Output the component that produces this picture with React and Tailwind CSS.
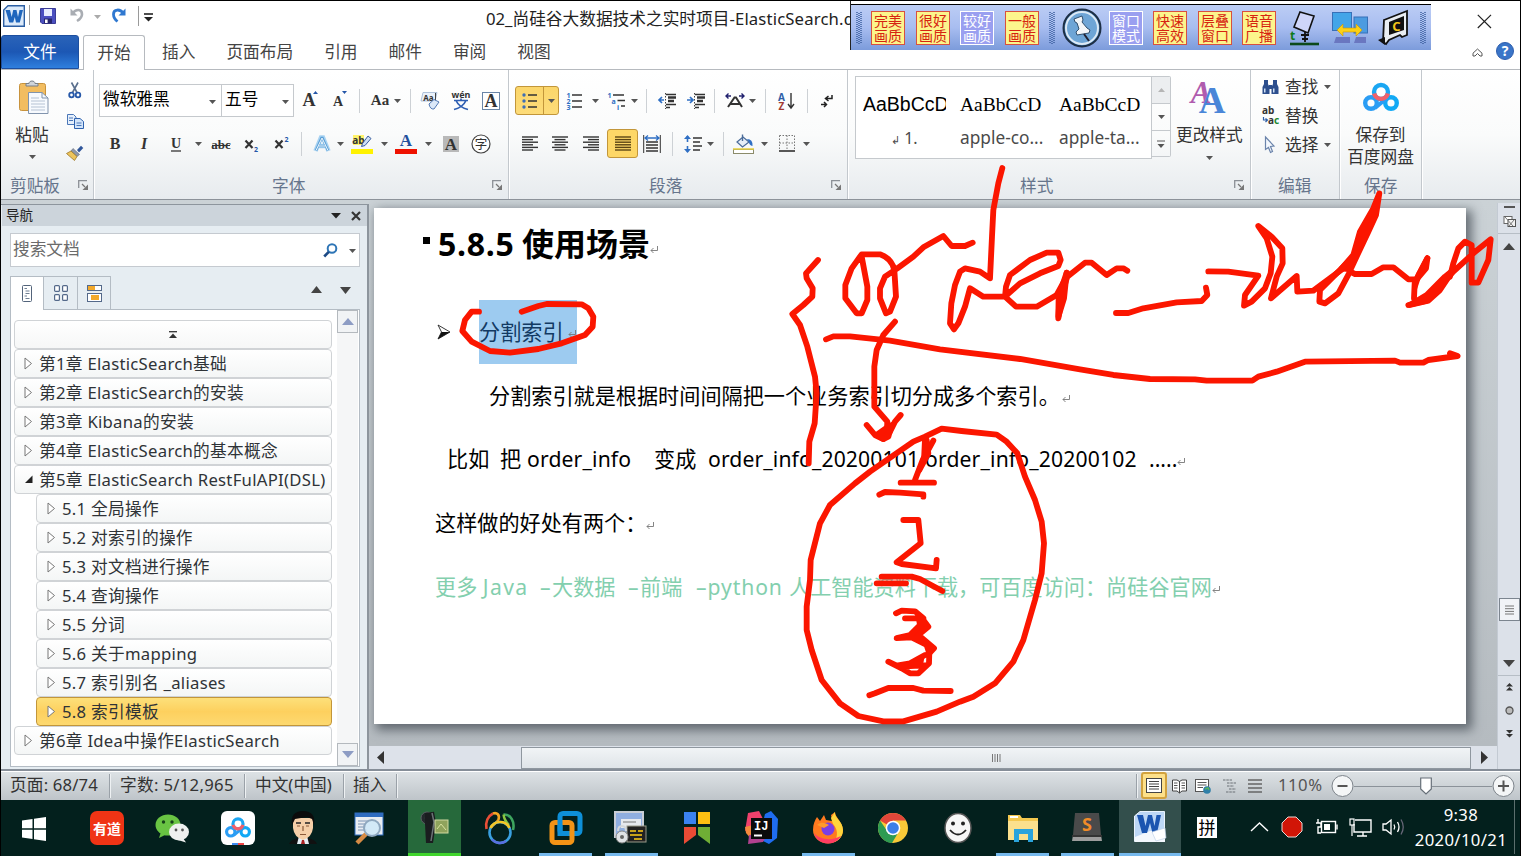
import React from "react";

const Svg = ({ w, h, vb, className = "", children }) => (
  <svg width={w} height={h} viewBox={vb || `0 0 ${w} ${h}`} className={`block shrink-0 overflow-visible ${className}`} fill="none">
    {children}
  </svg>
);

/* ---------- small shared pieces ---------- */
const Tri = ({ className = "", c = "#555" }) => (
  <Svg w={7} h={4} className={className}><path d="M0 0H7L3.5 4Z" fill={c} /></Svg>
);
const Sep = ({ className = "" }) => <div className={`h-6 w-px shrink-0 bg-[#cdd1d5] ${className}`} />;
const Launcher = ({ className = "" }) => (
  <Svg w={11} h={11} className={className}>
    <path d="M.7 8V.7H9" stroke="#8b9096" strokeWidth="1.3" />
    <path d="M4 4L7 7" stroke="#777" strokeWidth="1.2" /><path d="M10 4.5V10H4.5Z" fill="#777" />
  </Svg>
);
const Serif = ({ x, y, s, c = "#333", b, i, children, a = "middle" }) => (
  <text x={x} y={y} fontSize={s} fill={c} textAnchor={a} fontFamily="'Liberation Serif', serif" fontWeight={b ? 700 : 400} fontStyle={i ? "italic" : "normal"}>{children}</text>
);
const Sans = ({ x, y, s, c = "#333", b, a = "middle", children }) => (
  <text x={x} y={y} fontSize={s} fill={c} textAnchor={a} fontFamily="'Noto Sans', 'Noto Sans CJK SC', sans-serif" fontWeight={b ? 700 : 400}>{children}</text>
);

const BaiduPan = ({ w = 36, h = 30 }) => (
  <Svg w={w} h={h} vb="0 0 36 30">
    <circle cx="8" cy="21" r="5.8" stroke="#2b9df4" strokeWidth="4.4" />
    <circle cx="28" cy="21" r="5.8" stroke="#12a9f5" strokeWidth="4.4" />
    <path d="M12 26L24 16" stroke="#2b9df4" strokeWidth="4" />
    <circle cx="18" cy="10" r="7" stroke="#1aa6f2" strokeWidth="4.4" />
    <path d="M11.2 11.5A7 7 0 0 0 24.8 11.5" stroke="#f0606a" strokeWidth="4.4" />
  </Svg>
);

/* ---------- title bar ---------- */
const TitleBar = () => (
  <div className="flex h-[34px] shrink-0 items-start pl-[2px] pt-[4px]">
    <Svg w={22} h={22}>
      <path d="M5 .7H21.3V21.3H.7V5Z" fill="#dbe9f8" stroke="#2b5ea3" strokeWidth="1.4" />
      <path d="M5 2.5H19.5V19.5H2.5V5Z" fill="#dceafa" />
      <path d="M2.500 5H7L8.700 12L10.200 5H13.500L15 12L16.500 5H20L16.800 17.500H13L11.800 12L10.200 17.500H6.300Z" fill="#1f66bd" />
    </Svg>
    <div className="ml-[4px] h-[20px] w-px bg-[#9a9a9a]" />
    <Svg w={16} h={16} className="ml-[10px] mt-[3px]">
      <path d="M.5 .5H15.5V15.5H2L.5 14Z" fill="#4b4fc0" stroke="#3a3b96" />
      <rect x="4" y="1" width="8" height="7" fill="#e8ecff" /><rect x="4" y="10.5" width="8" height="5" fill="#26266e" /><rect x="5" y="11.5" width="2.6" height="3.5" fill="#fff" />
    </Svg>
    <Svg w={15} h={16} className="ml-[14px] mt-[2px]">
      <path d="M2.5 6.5C6 1.5 12 2 12 7.2C12 10.5 9.5 12.5 7 14" stroke="#a9adb3" strokeWidth="2.6" /><path d="M.5 1.5V8.5H7.5Z" fill="#a9adb3" />
    </Svg>
    <Tri className="ml-[9px] mt-[10px]" c="#aaa" />
    <Svg w={16} h={16} className="ml-[10px] mt-[2px]">
      <path d="M12.5 6.5C9 1.5 2.5 2 2.5 7.2C2.5 10.5 4 12.5 6.5 14.5" stroke="#2f78d0" strokeWidth="2.8" /><path d="M14.5 1.5V8.5H7.5Z" fill="#2f78d0" />
    </Svg>
    <div className="ml-[11px] mt-[1px] h-[20px] w-px bg-[#9a9a9a]" />
    <Svg w={9} h={9} className="ml-[5px] mt-[8px]"><path d="M0 1H9" stroke="#222" strokeWidth="1.6" /><path d="M0 4H9L4.5 8.5Z" fill="#222" /></Svg>
    <div className="ml-[333px] whitespace-nowrap text-[16.7px] leading-[27px] text-[#222]">
      <span>02_</span>尚硅谷大数据技术之实时项目<span className="tracking-[0.15px]">-ElasticSearch.docx</span>
    </div>
    <Svg w={15} h={15} className="ml-auto mr-[28px] mt-[9px]"><path d="M.8 .8L14 14M14 .8L.8 14" stroke="#222" strokeWidth="1.2" /></Svg>
  </div>
);

const tabs = [
  ["插入", "ml-[17px]"],
  ["页面布局", "ml-[31px]"],
  ["引用", "ml-[31px]"],
  ["邮件", "ml-[31px]"],
  ["审阅", "ml-[31px]"],
  ["视图", "ml-[31px]"],
];
const TabRow = () => (
  <div className="flex h-[35px] shrink-0 items-stretch border-b border-[#b6babf] text-[16.7px] text-[#444]">
    <div className="flex w-[78px] items-center justify-center rounded-t-[3px] border border-[#1d4f9f] bg-linear-to-b from-[#2a63b8] via-[#1c57b4] to-[#2f7fde] text-white">文件</div>
    <div className="-mb-px ml-[4px] flex w-[62px] items-center justify-center rounded-t-[3px] border border-b-0 border-[#b6babf] bg-white pb-px">开始</div>
    {tabs.map(([t, m]) => (
      <div key={t} className={`flex items-center whitespace-nowrap ${m}`}>{t}</div>
    ))}
    <Svg w={11} h={9} className="ml-auto mr-[13px] mt-[13px]"><path d="M1 5.2L5.5 1L10 5.2V8H8L5.5 5.5L3 8H1Z" stroke="#555" fill="#fff" /></Svg>
    <Svg w={18} h={18} className="mr-[6px] mt-[7px]">
      <circle cx="9" cy="9" r="8.5" fill="#3a75c8" stroke="#2f5fae" /><Sans x={9} y={14} s={14} c="#fff" b>?</Sans>
    </Svg>
  </div>
);

/* ---------- ribbon ---------- */
const Group = ({ className, children }) => (
  <div className={`flex shrink-0 flex-col border-r border-[#c3c8cd] shadow-[1px_0_0_#fff] ${className}`}>{children}</div>
);
const Label = ({ children, className = "", launch }) => (
  <div className="mt-auto flex h-[26px] items-center pb-[1px] text-[16.7px] text-[#66758c]">
    <span className={`whitespace-nowrap ${className}`}>{children}</span>
    {launch && <Launcher className={launch} />}
  </div>
);

const Clipboard = () => (
  <Group className="w-[93px]">
    <div className="flex">
      <div className="flex w-[62px] flex-col items-center pt-[10px]">
        <Svg w={30} h={34} className="ml-[3px]">
          <rect x=".5" y="3.5" width="26" height="27" rx="2" fill="#f2bd60" stroke="#c8933d" />
          <path d="M7 6V3.5H10C10 .2 16 .2 16 3.5H19V6Z" fill="#cfd4da" stroke="#777f88" />
          <path d="M9.500 12.500H23L29 18V33.500H9.500Z" fill="#f7fafe" stroke="#8194ad" />
          <path d="M23 12.500V18H29" stroke="#8194ad" /><path d="M12 18H20M12 21H26M12 24H26M12 27H26M12 30H26" stroke="#b5c2d3" />
        </Svg>
        <div className="mt-[9px] text-[16.7px] leading-[24px] text-[#333]">粘贴</div>
        <Tri className="mt-[8px]" />
      </div>
      <div className="flex w-[24px] flex-col items-center pt-[12px]">
        <Svg w={14} h={17}>
          <path d="M3.500 .5L9 10.500M10 .5L4.500 10.500" stroke="#5a6f8d" strokeWidth="1.600" />
          <circle cx="3.500" cy="13" r="2.300" stroke="#2557a8" strokeWidth="1.800" /><circle cx="10" cy="13" r="2.300" stroke="#2557a8" strokeWidth="1.800" />
        </Svg>
        <Svg w={17} h={15} className="mt-[15px]">
          <path d="M.5 .5H6.500L9 3V10.500H.5Z" fill="#e5effb" stroke="#4a77b8" /><path d="M7.500 4.500H13L16.500 7.500V14.500H7.500Z" fill="#d3e5fa" stroke="#2f62ae" />
          <path d="M2 4H6M2 6.500H6M9.500 9H14.500M9.500 11.500H14.500" stroke="#4a77b8" />
        </Svg>
        <Svg w={18} h={16} className="mt-[16px]">
          <path d="M11 5L15 .8L17.300 3L13 7.500Z" fill="#30569a" /><path d="M7 3.500L13.500 9.500L11 11.500L5 6Z" fill="#8f98a8" stroke="#5c6575" strokeWidth=".6" />
          <path d="M5 6L11 11.500L8.500 15.500L.5 8.500Z" fill="#edc45c" stroke="#9b7627" strokeWidth=".8" />
        </Svg>
      </div>
    </div>
    <Label className="ml-[9px]" launch="ml-[18px]">剪贴板</Label>
  </Group>
);

const FontGroup = () => (
  <Group className="w-[415px] pl-[5px]">
    <div className="mt-[14px] flex h-[33px] items-center">
      <div className="flex h-[33px] w-[195px] shrink-0 border border-[#c5c9cd] bg-white text-[16.7px] text-black">
        <div className="flex w-[122px] items-center justify-between border-r border-[#c5c9cd] pl-[3px] pr-[5px]"><span className="-mt-1">微软雅黑</span><Tri className="mt-[2px]" /></div>
        <div className="flex flex-1 items-center justify-between pl-[3px] pr-[4px]"><span className="-mt-1">五号</span><Tri className="mt-[2px]" /></div>
      </div>
      <Svg w={18} h={18} className="ml-[8px] mt-[-3px]"><Serif x={7} y={16} s={18} b>A</Serif><path d="M11 4L13.500 1L16 4Z" fill="#2456a8" /></Svg>
      <Svg w={16} h={18} className="ml-[12px] mt-[-3px]"><Serif x={6} y={16} s={14} b>A</Serif><path d="M10 1H15L12.500 4Z" fill="#2456a8" /></Svg>
      <Sep className="ml-[11px]" />
      <Svg w={20} h={18} className="ml-[10px] mt-[-2px]"><Serif x={10} y={14} s={15} b>Aa</Serif></Svg>
      <Tri className="ml-[4px]" />
      <Sep className="ml-[9px]" />
      <Svg w={20} h={18} className="ml-[10px]">
        <path d="M2 .5H16L14 9H0Z" fill="#eaf1fa" stroke="#9db4d2" strokeWidth=".8" /><Sans x={7.500} y={8.500} s={8} c="#333" b>Aa</Sans><path d="M14.500 1V9" stroke="#444" />
        <path d="M8 12L13 7.500L18 10L13 17Q9 17.500 8 12Z" fill="#dbe8f8" stroke="#5279b5" />
      </Svg>
      <Svg w={20} h={20} className="ml-[10px]"><Sans x={10} y={7} s={9} b>wén</Sans><path d="M3 9.500H17M10 7.500V9.500M5 9.500C7 14 11 17 17 18.500M15 9.500C13 14 9 17 3 18.500" stroke="#2f5fb3" strokeWidth="1.700" /></Svg>
      <Svg w={18} h={18} className="ml-[11px]"><rect x=".5" y=".5" width="17" height="17" fill="#fff" stroke="#6a86a8" /><Serif x={9} y={15} s={18} b>A</Serif></Svg>
    </div>
    <div className="mt-[15px] flex h-[24px] items-center">
      <Svg w={16} h={18} className="ml-[8px]"><Serif x={8} y={14} s={16} b>B</Serif></Svg>
      <Svg w={12} h={18} className="ml-[15px]"><Serif x={6} y={14} s={16} b i>I</Serif></Svg>
      <Svg w={12} h={18} className="ml-[20px]"><Serif x={6} y={13} s={14} b>U</Serif><path d="M1 16H11" stroke="#333" strokeWidth="1.300" /></Svg>
      <Tri className="ml-[13px]" />
      <Svg w={20} h={18} className="ml-[9px]"><Serif x={10} y={14} s={13} b>abc</Serif><path d="M1 10.500H19" stroke="#333" /></Svg>
      <Svg w={16} h={18} className="ml-[13px]"><path d="M1.500 5.500L8.500 13M8.500 5.500L1.500 13" stroke="#333" strokeWidth="2.200" /><Sans x={12} y={17} s={7} c="#2456a8" b>2</Sans></Svg>
      <Svg w={16} h={18} className="ml-[14px]"><path d="M1.500 5.500L8.500 13M8.500 5.500L1.500 13" stroke="#333" strokeWidth="2.200" /><Sans x={12.500} y={6.500} s={7} c="#2456a8" b>2</Sans></Svg>
      <Sep className="ml-[11px]" />
      <Svg w={18} h={20} className="ml-[11px]"><path d="M2.500 17L8 3.500H10L15.500 17M5 12H13" stroke="#a9d3f2" strokeWidth="4.500" /><path d="M3 16.500L8.500 4H9.500L15 16.500M5.500 12H12.500" stroke="#5a9fd6" strokeWidth="2.400" /><path d="M3 16.500L9 4L15 16.500M5.500 12H12.500" stroke="#eef7fd" strokeWidth="1" /></Svg>
      <Tri className="ml-[6px]" />
      <Svg w={22} h={22} className="ml-[7px]">
        <path d="M2 2H13V12H2Z" fill="#fff36b" /><Sans x={7.500} y={10.500} s={10} b>ab</Sans>
        <path d="M17 3L20 5.500L14 12.500L10.500 13.500L11.500 10.500Z" fill="#cfdff5" stroke="#3a5f9f" /><rect x="0" y="16" width="22" height="5" fill="#fff200" />
      </Svg>
      <Tri className="ml-[8px]" />
      <Svg w={22} h={22} className="ml-[7px]"><Serif x={11} y={13} s={17} c="#234f9d" b>A</Serif><rect x="0" y="16" width="22" height="5" fill="#ee1100" /></Svg>
      <Tri className="ml-[8px]" />
      <Svg w={16} h={16} className="ml-[11px]"><rect width="16" height="16" fill="#b9b9b9" /><Serif x={8} y={14} s={17} b>A</Serif></Svg>
      <Svg w={20} h={20} className="ml-[12px]"><circle cx="10" cy="10" r="9" stroke="#444" fill="#fff" strokeWidth="1.200" /><Sans x={10} y={14.500} s={12.500}>字</Sans></Svg>
    </div>
    <Label className="ml-[173px]" launch="ml-[187px]">字体</Label>
  </Group>
);

const Lines = ({ l, w = 16, c = "#333" }) => (
  <Svg w={w} h={15}>
    {l.map(([a, b], k) => <path key={k} d={`M${a} ${1 + k * 2.6}H${b}`} stroke={c} strokeWidth="1.400" />)}
  </Svg>
);
const LeftL = [[0, 16], [0, 11], [0, 16], [0, 11], [0, 16], [0, 11]];
const CenL = [[0, 16], [2.5, 13.5], [0, 16], [2.5, 13.5], [0, 16], [2.5, 13.5]];
const RightL = [[0, 16], [5, 16], [0, 16], [5, 16], [0, 16], [5, 16]];
const FullL = [[0, 16], [0, 16], [0, 16], [0, 16], [0, 16], [0, 16]];
const Indent = ({ flip }) => (
  <Svg w={18} h={16}>
    <path d="M8 1.500H18M8 11.500H18M8 14.500H12" stroke="#333" strokeWidth="1.500" /><path d="M10 4.500H18M10 8H16" stroke="#333" strokeWidth="2.300" />
    <path d="M7.500 0V16" stroke="#444" strokeDasharray="1.500 1.500" />
    {flip ? <path d="M0 7H5M3 4L6 7L3 10" stroke="#2f6fc4" strokeWidth="1.700" /> : <path d="M1 7H6M4 4L1 7L4 10" stroke="#2f6fc4" strokeWidth="1.700" />}
  </Svg>
);

const ParagraphGroup = () => (
  <Group className="w-[339px] pl-[6px]">
    <div className="mt-[16px] flex h-[29px] items-center">
      <div className="flex h-[29px] w-[44px] shrink-0 items-center rounded-[3px] border border-[#c2963a] bg-linear-to-b from-[#fbd66b] to-[#fddc79]">
        <Svg w={16} h={16} className="ml-[6px]">
          {[2, 8, 14].map((y) => <g key={y}><circle cx="2" cy={y} r="1.700" fill="#3e6fb5" /><path d={`M6 ${y}H15`} stroke="#333" strokeWidth="1.500" /></g>)}
        </Svg>
        <div className="ml-[5px] h-full w-px bg-[#c2963a]" />
        <Tri className="ml-[4px]" />
      </div>
      <Svg w={16} h={18} className="ml-[7px]">
        {[3, 9, 15].map((y, k) => <g key={y}><Sans x={2.500} y={y + 2.500} s={7} c="#2f6fc4" b>{k + 1}</Sans><path d={`M6 ${y}H16`} stroke="#333" strokeWidth="1.500" /></g>)}
      </Svg>
      <Tri className="ml-[10px]" />
      <Svg w={20} h={18} className="ml-[8px]">
        <Sans x={2.500} y={6} s={7} c="#2f6fc4" b>1</Sans><Sans x={6.500} y={11.500} s={7} c="#2f6fc4" b>a</Sans><Sans x={11} y={17.500} s={7} c="#2f6fc4" b>i</Sans>
        <path d="M6 3H17M10.500 8.500H18M14 14H18" stroke="#333" strokeWidth="1.500" />
      </Svg>
      <Tri className="ml-[4px]" />
      <Sep className="ml-[8px]" />
      <div className="ml-[11px]"><Indent /></div>
      <div className="ml-[11px]"><Indent flip /></div>
      <Sep className="ml-[9px]" />
      <Svg w={20} h={18} className="ml-[10px]">
        <path d="M3 15L9.500 5.500H11L17 15M5 12H15" stroke="#333" strokeWidth="2" /><path d="M1 4H6M3.500 1.500L1 4L3.500 6.500M19 4H14M16.500 1.500L19 4L16.500 6.500" stroke="#20206e" strokeWidth="1.400" />
      </Svg>
      <Tri className="ml-[4px]" />
      <Sep className="ml-[9px]" />
      <Svg w={18} h={18} className="ml-[11px]">
        <Sans x={4.500} y={8.500} s={10} c="#2f5fa8" b>A</Sans><Sans x={4.500} y={17.500} s={10} c="#a23b34" b>Z</Sans><path d="M14 1V15M11 12L14 16L17 12" stroke="#333" strokeWidth="1.400" />
      </Svg>
      <Sep className="ml-[12px]" />
      <Svg w={14} h={16} className="ml-[12px]"><path d="M12 2V5.500H6M8.500 3L5.500 5.500L8.500 8M1 11.500H6M4 9L6.500 11.500L4 14" stroke="#222" strokeWidth="1.500" /></Svg>
    </div>
    <div className="mt-[14px] flex h-[29px] items-center">
      <div className="ml-[7px]"><Lines l={LeftL} /></div>
      <div className="ml-[14px]"><Lines l={CenL} /></div>
      <div className="ml-[15px]"><Lines l={RightL} /></div>
      <div className="ml-[8px] flex h-[29px] w-[31px] items-center justify-center rounded-[3px] border border-[#c2963a] bg-[#fdd767]"><Lines l={FullL} c="#5b4514" /></div>
      <Svg w={18} h={18} className="ml-[5px]">
        <path d="M.7 0V18M17.300 0V18" stroke="#333" /><path d="M3 7H15M3 10H15M3 13H15M3 16H15" stroke="#333" strokeWidth="1.400" /><path d="M2 3H16M5 .5L2 3L5 5.500M13 .5L16 3L13 5.500" stroke="#2f6fc4" strokeWidth="1.300" />
      </Svg>
      <Sep className="ml-[11px]" />
      <Svg w={18} h={18} className="ml-[11px]">
        <path d="M3.500 1V7M3.500 11V17" stroke="#2f6fc4" strokeWidth="1.600" /><path d="M0 4L3.500 0L7 4ZM0 14L3.500 18L7 14Z" fill="#2f6fc4" /><path d="M9 3H18M9 7H16M9 11H18M9 15H16" stroke="#333" strokeWidth="1.500" />
      </Svg>
      <Tri className="ml-[5px]" />
      <Sep className="ml-[9px]" />
      <Svg w={22} h={20} className="ml-[9px]">
        <path d="M4 8L10 3L16 8L9.500 13Z" fill="#e6eef8" stroke="#4a6b99" strokeWidth="1.200" /><path d="M9.500 7V.5" stroke="#4a6b99" strokeWidth="1.400" /><path d="M14 5Q20 5 19.500 12Q16 11 16 8Z" fill="#2f6fc4" /><rect x=".5" y="15.500" width="20" height="4" fill="#fff" stroke="#8b8b6a" /><path d="M0 15H21" stroke="#e4cf3f" strokeWidth="1.500" />
      </Svg>
      <Tri className="ml-[6px]" />
      <Svg w={16} h={17} className="ml-[11px]"><path d="M.5 .5H15.500V15.500M.5 .5V15.500M8 .5V15.500M.5 8H15.500" stroke="#777" strokeDasharray="1.500 1.500" /><path d="M0 16H16" stroke="#222" strokeWidth="1.500" /></Svg>
      <Tri className="ml-[8px]" />
    </div>
    <Label className="ml-[134px]" launch="ml-[149px]">段落</Label>
  </Group>
);

const StyleCell = ({ className = "", big, small, serif }) => (
  <div className={`flex shrink-0 flex-col ${className}`}>
    <div className={serif ? "h-[36px] whitespace-nowrap font-['Liberation_Serif'] text-[19.500px] leading-[36px] text-black" : "h-[36px] w-[83px] overflow-hidden whitespace-nowrap font-['Liberation_Sans'] text-[19.500px] leading-[34px] text-black"}>{big}</div>
    <div className="whitespace-nowrap text-[17.300px] leading-[30px] text-[#4a4a4a]">{small}</div>
  </div>
);

const StylesGroup = () => (
  <Group className="w-[403px]">
    <div className="flex pl-[7px] pt-[6px]">
      <div className="flex h-[83px] w-[297px] shrink-0 overflow-hidden border border-[#c5c9cd] bg-white pt-[10px]">
        <StyleCell className="ml-[7px]" big="AaBbCcD" small={<span className="ml-[28px] text-[16px]"><span className="text-[11px]">↲</span> 1.</span>} />
        <StyleCell className="ml-[14px] w-[83px]" serif big="AaBbCcD" small="apple-co..." />
        <StyleCell className="ml-[16px] w-[83px]" serif big="AaBbCcD" small="apple-ta..." />
      </div>
      <div className="flex h-[81px] w-[19px] shrink-0 flex-col rounded-r-[2px] border border-l-0 border-[#c5c9cd]">
        <div className="flex h-[27px] items-center justify-center border-b border-[#c5c9cd] bg-[#eceef0]"><Svg w={7} h={4}><path d="M0 4H7L3.500 0Z" fill="#b5b5b5" /></Svg></div>
        <div className="flex h-[27px] items-center justify-center border-b border-[#c5c9cd]"><Tri /></div>
        <div className="flex flex-1 items-center justify-center"><Svg w={8} h={8}><path d="M0 1H8" stroke="#555" /><path d="M.5 4H7.500L4 8Z" fill="#555" /></Svg></div>
      </div>
      <div className="ml-[5px] flex flex-col items-center pt-[5px]">
        <Svg w={34} h={31} className="mt-[1px]">
          <Serif x={9} y={21} s={31} c="#b05cae" b i>A</Serif><Serif x={20} y={30.500} s={37} c="#4a86d8" b>A</Serif>
        </Svg>
        <div className="mt-[10px] whitespace-nowrap text-[16.7px] leading-[24px] text-[#333]">更改样式</div>
        <Tri className="mt-[9px]" />
      </div>
    </div>
    <Label className="ml-[172px]" launch="ml-[181px]">样式</Label>
  </Group>
);

const EditGroup = () => (
  <Group className="w-[89px]">
    <div className="mt-[2px] flex flex-col text-[16.7px] text-[#333]">
      <div className="flex h-[29px] items-center pl-[11px]">
        <Svg w={17} h={16}>
          <path d="M2 1H6V5L7.500 8V15H.5V8L2 5ZM11 1H15V5L16.500 8V15H9.500V8L11 5Z" fill="#2d4f8e" /><path d="M7 6H10V10H7Z" fill="#2d4f8e" /><path d="M2 9.500H3.500V13.500H2ZM11 9.500H12.500V13.500H11Z" fill="#cfe0f5" />
        </Svg>
        <span className="ml-[6px]">查找</span><Tri className="ml-[6px]" />
      </div>
      <div className="flex h-[29px] items-center pl-[11px]">
        <Svg w={18} h={18}><Sans x={0} y={7} s={10} b a="start">ab</Sans><path d="M1.500 10V13H5M3.500 11.500L5.500 13L3.500 15" stroke="#2f5fa8" strokeWidth="1.200" /><Sans x={6} y={16.500} s={10} b a="start">a</Sans><Sans x={12} y={16.500} s={10} b a="start" c="#1e8a33">c</Sans></Svg>
        <span className="ml-[5px]">替换</span>
      </div>
      <div className="flex h-[29px] items-center pl-[11px]">
        <Svg w={17} h={18}><path d="M3.500 1L12 10L8.500 10.500L10.500 15.500L8.500 16.500L6.500 11.500L3.500 13.500Z" fill="#f4f8fd" stroke="#6b84ab" strokeWidth="1.200" /></Svg>
        <span className="ml-[6px]">选择</span><Tri className="ml-[6px]" />
      </div>
    </div>
    <Label className="ml-[27px]">编辑</Label>
  </Group>
);

const SaveGroup = () => (
  <Group className="w-[82px]">
    <div className="flex flex-col items-center pt-[12px] text-[16.7px] leading-[22px] text-[#333]">
      <BaiduPan />
      <div className="mt-[12px] whitespace-nowrap">保存到</div>
      <div className="whitespace-nowrap">百度网盘</div>
    </div>
    <Label className="ml-[24px]">保存</Label>
  </Group>
);

const Ribbon = () => (
  <div className="flex h-[130px] shrink-0 border-b border-[#8c9299] bg-linear-to-b from-white via-[#fafbfb] to-[#e7ebee]">
    <Clipboard /><FontGroup /><ParagraphGroup /><StylesGroup /><EditGroup /><SaveGroup />
  </div>
);

/* ---------- navigation pane ---------- */
const outline = [
  ["第1章 ElasticSearch基础", 0], ["第2章 ElasticSearch的安装", 0], ["第3章 Kibana的安装", 0], ["第4章 ElasticSearch的基本概念", 0],
  ["第5章 ElasticSearch RestFulAPI(DSL)", 0, "open"],
  ["5.1 全局操作", 1], ["5.2 对索引的操作", 1], ["5.3 对文档进行操作", 1], ["5.4 查询操作", 1], ["5.5 分词", 1], ["5.6 关于mapping", 1], ["5.7 索引别名 _aliases", 1], ["5.8 索引模板", 1, "on"],
  ["第6章 Idea中操作ElasticSearch", 0],
];
const itemBase = "flex h-[29px] shrink-0 items-center rounded-[4px] border text-[16.7px] text-[#2f3337]";
const ScrollBtn = ({ up }) => (
  <div className="flex h-[23px] w-[21px] items-center justify-center border border-[#b4b9be] bg-[#f1f3f5]">
    <Svg w={12} h={7}><path d={up ? "M0 7H12L6 0Z" : "M0 0H12L6 7Z"} fill="#8d9cc4" /></Svg>
  </div>
);
const NavPane = () => (
  <div className="mt-[4px] flex w-[368px] shrink-0 flex-col border-r-2 border-t border-[#8d959d] bg-[#e6edf2] pl-px">
    <div className="flex h-[21px] shrink-0 items-center bg-[#ccd4db] pl-[4px] text-[13.500px] text-[#222]">
      导航
      <Svg w={10} h={6} className="ml-auto"><path d="M0 0H10L5 5.500Z" fill="#222" /></Svg>
      <Svg w={10} h={10} className="ml-[10px] mr-[6px]"><path d="M1 1L9 9M9 1L1 9" stroke="#333" strokeWidth="2.200" /></Svg>
    </div>
    <div className="ml-[8px] mt-[7px] flex h-[34px] w-[350px] shrink-0 items-center border border-[#c5cad0] bg-white pl-[2px] text-[16.7px] text-[#6b6b6b]">
      <span className="-mt-[3px]">搜索文档</span>
      <Svg w={15} h={15} className="ml-auto"><circle cx="9" cy="5.500" r="4.300" stroke="#2e75b6" strokeWidth="2" /><path d="M5.800 8.800L1.200 13.500" stroke="#1c4a85" strokeWidth="2.600" /></Svg>
      <Tri className="ml-[11px] mr-[3px] mt-[2px]" />
    </div>
    <div className="ml-[8px] mt-[9px] flex h-[33px] w-[350px] shrink-0 items-stretch">
      <div className="z-10 -mb-px flex w-[34px] items-center justify-center border border-b-0 border-[#b4bcc4] bg-white">
        <Svg w={10} h={18}><rect x=".5" y=".5" width="9" height="16" rx="1" fill="#fff" stroke="#53647b" /><path d="M2.500 3.500H5M3.500 6H7.500M3.500 8.500H7.500M2.500 11H5M3.500 13.500H7.500" stroke="#6f7f93" strokeWidth="1" /></Svg>
      </div>
      <div className="flex w-[34px] items-center justify-center border-r border-t border-[#b4bcc4]">
        <Svg w={14} h={16}>{[[0, 0], [8, 0], [0, 9], [8, 9]].map(([x, y]) => <rect key={`${x}-${y}`} x={x + 0.6} y={y + 0.6} width="4.800" height="5.800" rx="1" fill="#fff" stroke="#54698a" strokeWidth="1.200" />)}</Svg>
      </div>
      <div className="flex w-[33px] items-center justify-center border-r border-t border-[#b4bcc4]">
        <Svg w={15} h={17}><rect x=".5" y=".5" width="14" height="5" fill="#fff" stroke="#54698a" /><rect x="1" y="1" width="7" height="4" fill="#f3a92b" /><rect x=".5" y="8.500" width="14" height="8" fill="#fff" stroke="#54698a" /><rect x="4" y="10" width="8" height="5" fill="#f3a92b" /></Svg>
      </div>
      <Svg w={11} h={7} className="ml-auto mt-[10px]"><path d="M0 7H11L5.500 0Z" fill="#444" /></Svg>
      <Svg w={11} h={7} className="ml-[18px] mr-[9px] mt-[11px]"><path d="M0 0H11L5.500 7Z" fill="#444" /></Svg>
    </div>
    <div className="ml-[8px] flex h-[458px] w-[350px] shrink-0 border border-[#b4bcc4] bg-white">
      <div className="flex w-[326px] shrink-0 flex-col pl-[3px] pt-[10px]">
        <div className="flex h-[29px] w-[318px] shrink-0 items-center justify-center rounded-[4px] border border-[#d0d3d6] bg-linear-to-b from-white to-[#f6f7f7]">
          <Svg w={8} h={7}><path d="M0 .7H8" stroke="#333" strokeWidth="1.300" /><path d="M0 7H8L4 2.500Z" fill="#333" /></Svg>
        </div>
        {outline.map(([t, lvl, st]) => (
          <div key={t} className={`${itemBase} ${lvl ? "ml-[22px] w-[296px] pl-[1px]" : "w-[318px]"} ${st === "on" ? "border-[#c2963a] bg-linear-to-b from-[#fde07a] via-[#fdd05e] to-[#fdd970]" : "border-[#d0d3d6] bg-linear-to-b from-white to-[#f4f6f6]"}`}>
            {st === "open" ? (
              <Svg w={9} h={9} className="ml-[9px]"><path d="M8.500 .5V8H1Z" fill="#222" /></Svg>
            ) : (
              <Svg w={9} h={13} className="ml-[9px]"><path d="M1 1L7.500 6.500L1 12Z" fill="#fff" stroke="#777" /></Svg>
            )}
            <span className="ml-[6px] whitespace-nowrap tracking-[0.28px]">{t}</span>
          </div>
        ))}
      </div>
      <div className="flex w-[21px] flex-col justify-between bg-[#f5f6f7]"><ScrollBtn up /><ScrollBtn /></div>
    </div>
  </div>
);

/* ---------- document ---------- */
const Pilcrow = ({ className = "" }) => (
  <Svg w={8} h={8} className={className}><path d="M7.500 0V4.500H1M3.500 2L1 4.500L3.500 7" stroke="#777" strokeWidth=".9" /></Svg>
);
const lineCls = "flex h-[63.7px] items-center whitespace-nowrap text-[21.15px]";
const Page = () => (
  <div className="flex h-[516px] w-[1092px] shrink-0 flex-col bg-white shadow-[4px_4px_10px_2px_rgba(70,78,86,0.75)]">
    <div className="flex h-[71px] shrink-0 items-center">
      <div className="ml-[49px] mt-[-6px] h-[7px] w-[7px] bg-black" />
      <div className="ml-[8px] whitespace-nowrap text-[32px] font-bold leading-[40px] text-black"><span className="inline-block w-[84px] tracking-[0.7px]">5.8.5</span>使用场景</div>
      <Pilcrow className="mt-[12px]" />
    </div>
    <div className="mt-[21px] flex flex-col text-black">
      <div className={lineCls}>
        <Svg w={14} h={16} className="ml-[63px]"><path d="M1 1L13 8L1 15L4.500 8Z" fill="#fff" stroke="#222" strokeWidth=".9" /><path d="M4.500 8H13L1 15Z" fill="#111" /></Svg>
        <div className="ml-[28px] flex h-full w-[98px] items-center bg-[#9dcbf0] text-[#123a63]">分割索引<Pilcrow className="ml-[4px] mt-[4px]" /></div>
      </div>
      <div className={lineCls}><span className="ml-[115px] w-[571px]">分割索引就是根据时间间隔把一个业务索引切分成多个索引。</span><Pilcrow className="ml-[2px] mt-[6px]" /></div>
      <div className={lineCls}>
        <span className="ml-[73px] w-[53px]">比如</span><span className="w-[27px]">把</span><span className="w-[127px] tracking-[0.15px]">order_info</span><span className="w-[54px]">变成</span>
        <span className="w-[217px] tracking-[0.12px]">order_info_20200101</span><span className="w-[224px] tracking-[0.15px]">order_info_20200102</span><span>.....</span><Pilcrow className="mt-[6px]" />
      </div>
      <div className={lineCls}><span className="ml-[61px]">这样做的好处有两个：</span><Pilcrow className="mt-[6px]" /></div>
      <div className={`${lineCls} text-[#83cfae]`}>
        <span className="ml-[61px] w-[105px]">更多 <span className="tracking-[1.4px]">Java</span></span><span className="w-[88px]"><span className="tracking-[1.5px]">–</span>大数据</span><span className="w-[68px]"><span className="tracking-[1.5px]">–</span>前端</span><span className="w-[93px] tracking-[0.9px]">–python</span>
        <span>人工智能资料下载，可百度访问：尚硅谷官网</span><Pilcrow className="mt-[6px]" />
      </div>
    </div>
  </div>
);

const HScroll = () => (
  <div className="flex h-[23px] shrink-0 items-center bg-[#dde2ea]">
    <Svg w={7} h={13} className="ml-[8px]"><path d="M7 0V13L0 6.500Z" fill="#333" /></Svg>
    <div className="ml-[137px] flex h-[22px] w-[950px] items-center justify-center border border-[#8f979f] bg-linear-to-b from-[#f1f4f6] to-[#dfe4e8]">
      <Svg w={9} h={8}><path d="M.5 0V8M3 0V8M5.500 0V8M8 0V8" stroke="#777" /></Svg>
    </div>
    <Svg w={7} h={13} className="ml-[10px]"><path d="M0 0V13L7 6.500Z" fill="#333" /></Svg>
  </div>
);

const VScroll = () => (
  <div className="mt-[3px] flex w-[23px] shrink-0 flex-col items-center border-l border-[#c3cad3] bg-[#dce1e9]">
    <div className="mt-[3px] h-[2px] w-[11px] bg-[#555]" />
    <Svg w={13} h={13} className="mt-[7px]"><rect x="1" y="1.500" width="8" height="7" stroke="#666" fill="#fff" /><rect x="5" y="4.500" width="7.500" height="7" stroke="#555" fill="#f3f3f3" /><path d="M2 2L10 11M6 11L11 5" stroke="#777" /></Svg>
    <div className="mt-[5px] h-px w-full bg-[#b7bec6]" />
    <Svg w={12} h={7} className="mt-[9px]"><path d="M0 7H12L6 0Z" fill="#444" /></Svg>
    <div className="mt-[348px] flex h-[23px] w-[21px] items-center justify-center border border-[#7c858f] bg-[#f1f3f7]"><Svg w={9} h={10}><path d="M0 1H9M0 3.700H9M0 6.400H9M0 9H9" stroke="#777" /></Svg></div>
    <Svg w={12} h={7} className="mt-[39px]"><path d="M0 0H12L6 7Z" fill="#444" /></Svg>
    <div className="mt-[8px] h-px w-full bg-[#b7bec6]" />
    <Svg w={7} h={8} className="mt-[7px]"><path d="M0 3.500H7L3.500 0ZM0 7.500H7L3.500 4Z" fill="#333" /></Svg>
    <Svg w={9} h={9} className="mt-[15px]"><circle cx="4.500" cy="4.500" r="3.500" stroke="#555" fill="#bbb" strokeWidth="1.300" /></Svg>
    <Svg w={7} h={8} className="mt-[15px]"><path d="M0 0H7L3.500 3.500ZM0 4H7L3.500 7.500Z" fill="#333" /></Svg>
  </div>
);

/* ---------- status bar ---------- */
const StatusSep = ({ className }) => <div className={`h-[24px] w-px bg-[#9aa1a8] shadow-[1px_0_0_#eef1f3] ${className}`} />;
const StatusBar = () => (
  <div className="flex h-[29px] shrink-0 items-center border-t border-white bg-linear-to-b from-[#dde2e5] to-[#bec4c9] text-[16.7px] text-[#333]">
    <span className="-mt-[2px] ml-[9px] w-[99px] whitespace-nowrap tracking-[0.15px]">页面: 68/74</span><StatusSep className="" />
    <span className="-mt-[2px] ml-[10px] w-[124px] whitespace-nowrap tracking-[0.3px]">字数: 5/12,965</span><StatusSep className="" />
    <span className="-mt-[2px] ml-[10px] w-[88px] whitespace-nowrap">中文(中国)</span><StatusSep className="" />
    <span className="-mt-[2px] ml-[9px] w-[43px]">插入</span><StatusSep className="" />
    <StatusSep className="ml-[739px]" />
    <div className="-mt-px ml-[4px] flex h-[27px] w-[26px] items-center justify-center rounded-[3px] border-2 border-[#d2a23e] bg-[#fde08a]">
      <Svg w={16} h={15}><rect x=".5" y=".5" width="15" height="14" fill="#fff" stroke="#444" /><path d="M3 3.500H13M3 6H13M3 8.500H13M3 11H13" stroke="#444" /></Svg>
    </div>
    <Svg w={15} h={15} className="ml-[5px]"><path d="M7.500 2V14M.5 1H5L7.500 2.500L10 1H14.500V12H10L7.500 14L5 12H.5Z" fill="#fff" stroke="#444" /><path d="M2 4H5.500M2 6.500H5.500M2 9H5.500M9.500 4H13M9.500 6.500H13M9.500 9H13" stroke="#555" /></Svg>
    <Svg w={16} h={15} className="ml-[8px]"><rect x=".5" y=".5" width="13" height="12" fill="#fff" stroke="#555" /><path d="M2.500 3.500H11.500M2.500 6H11.500M2.500 8.500H8" stroke="#555" /><circle cx="12" cy="11" r="3.800" fill="#2f7fa8" /><path d="M10 10L13 9L14 11" stroke="#57b35c" strokeWidth="1.500" /></Svg>
    <Svg w={13} h={14} className="ml-[12px]"><path d="M0 1H9M4 4H13M4 7H11M6 10H13M3 13H13" stroke="#6b7076" strokeWidth="1.200" strokeDasharray="2.500 .8" /></Svg>
    <Svg w={14} h={14} className="ml-[12px]"><path d="M0 1H14M0 5H14M0 9H14M0 13H14" stroke="#666" strokeWidth="1.300" /></Svg>
    <span className="-mt-[2px] ml-[16px] w-[53px] tracking-[0.5px] text-[#555]">110%</span>
    <Svg w={23} h={23}><circle cx="11.500" cy="11" r="10.500" fill="#f4f6f7" stroke="#7d848b" /><path d="M6.500 11H16.500" stroke="#555" strokeWidth="2" /></Svg>
    <div className="flex w-[138px] items-center">
      <div className="h-px w-[66px] bg-[#8b9299]" />
      <Svg w={12} h={18}><path d="M.7 1H11.300V12L6 17L.7 12Z" fill="#fff" stroke="#666f78" strokeWidth="1.200" /></Svg>
      <div className="h-px flex-1 bg-[#8b9299]" />
    </div>
    <Svg w={23} h={23}><circle cx="11.500" cy="11" r="10.500" fill="#f4f6f7" stroke="#7d848b" /><path d="M6 11H17M11.500 5.500V16.500" stroke="#555" strokeWidth="2" /></Svg>
  </div>
);

/* ---------- task bar ---------- */
const I = {
  youdao: <Svg w={34} h={34}><rect width="34" height="34" rx="7" fill="#f03415" /><Sans x={17} y={22.500} s={14} c="#fff" b>有道</Sans></Svg>,
  wechat: (
    <Svg w={34} h={30}>
      <ellipse cx="13" cy="12" rx="12.500" ry="10.500" fill="#69c443" /><path d="M6 19L4 25L12 21Z" fill="#69c443" />
      <circle cx="8.500" cy="9" r="1.700" fill="#17431a" /><circle cx="17" cy="9" r="1.700" fill="#17431a" />
      <ellipse cx="24" cy="19" rx="10" ry="8.500" fill="#eef0ef" /><path d="M28 25L31 29.500L23 27Z" fill="#eef0ef" />
      <circle cx="21" cy="17" r="1.400" fill="#555" /><circle cx="27.500" cy="17" r="1.400" fill="#555" />
    </Svg>
  ),
  pan: (
    <div className="flex h-[34px] w-[34px] flex-col items-center overflow-hidden rounded-[6px] bg-white pt-[5px]">
      <BaiduPan w={26} h={23} />
      <div className="mt-[4px] flex"><div className="h-[2px] w-[6px] bg-[#3f8cf0]" /><div className="h-[2px] w-[6px] bg-[#e44]" /></div>
    </div>
  ),
  man: (
    <Svg w={30} h={35}>
      <path d="M1 34Q2 30 10 28H20Q28 30 29 34Z" fill="#111" /><path d="M11 26H19L21 34H9Z" fill="#e6eef5" />
      <path d="M5 8H25V18Q24 27 15 30Q6 27 5 18Z" fill="#f5cfa8" /><path d="M4 15Q2 1 15 1Q28 1 26 15L24 9L19 7L7 9Z" fill="#0b0b0b" />
      <path d="M8 13H13M17 13H22" stroke="#222" strokeWidth="1.500" /><path d="M9 16H12M18 16H21M15 16V21M12 24.500H18" stroke="#8a5a3a" strokeWidth="1.200" /><path d="M14 30H16L17 34H13Z" fill="#a22" />
    </Svg>
  ),
  finder: (
    <Svg w={30} h={32}>
      <rect x="1" y="1" width="28" height="22" fill="#e9edf2" stroke="#2f6cc0" /><rect x="1" y="1" width="28" height="4" fill="#2f6cc0" /><path d="M4 9H14M4 12H12M4 15H12M4 18H13" stroke="#7b93b3" />
      <path d="M12 22L3 31" stroke="#d68b45" strokeWidth="4.500" /><circle cx="18" cy="16" r="8" fill="#cfe8f7" fillOpacity=".9" stroke="#8fa8bf" strokeWidth="2" />
    </Svg>
  ),
  cam: (
    <Svg w={30} h={34}>
      <circle cx="8" cy="7" r="6" fill="#23282b" stroke="#5a6064" /><circle cx="8" cy="7" r="2.200" fill="#7d858a" /><path d="M6 2L15 .8L17 12L14 32H7L6 13Z" fill="#1a1d1f" /><path d="M13 2L15 11L12 30" stroke="#6b7276" strokeWidth="1.500" />
      <rect x="16" y="9" width="13" height="13" fill="#8fa35c" stroke="#cfd8a0" /><path d="M18 18L22 13L27 19" stroke="#d9e3a0" />
    </Svg>
  ),
  navi: (
    <Svg w={32} h={34}>
      <path d="M2.500 18C1 11 4 5 9 2.500" stroke="#e94f37" strokeWidth="2.600" /><path d="M9 2.500C13 1 16 4 14.500 8.500C13 12 9 13 7 16.500" stroke="#f5a623" strokeWidth="2.600" /><path d="M19.500 3.500C27 3 31 11 29 19" stroke="#3ea55f" strokeWidth="2.600" /><path d="M19.500 3.500C20 8 21 10 25 14" stroke="#8cc63f" strokeWidth="2.400" />
      <circle cx="16" cy="21.500" r="10.500" stroke="#3aa0e0" strokeWidth="2.600" /><path d="M6.500 17A10.500 10.500 0 0 1 25.500 17" stroke="#f5c623" strokeWidth="2.600" /><path d="M8 28.500A10.500 10.500 0 0 0 22 30" stroke="#5a6fe0" strokeWidth="2.600" />
    </Svg>
  ),
  vmware: <Svg w={34} h={34}><rect x="11" y="2.500" width="20" height="20" rx="3" stroke="#0e8fd8" strokeWidth="5" /><rect x="3" y="11.500" width="20" height="20" rx="3" stroke="#f39316" strokeWidth="5" /><path d="M11 9V22.500H20" stroke="#0e8fd8" strokeWidth="5" /></Svg>,
  putty: (
    <Svg w={34} h={33}>
      <rect x="1" y="1" width="28" height="25" fill="#8faee0" stroke="#c9ced6" strokeWidth="2" /><rect x="7" y="8" width="20" height="9" fill="#e6e9ee" /><path d="M9 11H22" stroke="#777" />
      <rect x="13" y="15" width="19" height="16" fill="#222" stroke="#9a9a8a" /><path d="M16 20H22M24 20H29M16 24H28M20 28H28" stroke="#c9a21a" strokeWidth="1.800" />
      <circle cx="8" cy="26" r="6" fill="#dfe2e5" stroke="#888" /><path d="M4 20Q4 15 8 15Q12 15 12 20" stroke="#d5d8db" strokeWidth="2" /><circle cx="8" cy="26" r="2" fill="#666" />
    </Svg>
  ),
  ribbon: <Svg w={26} h={32}><path d="M0 0H12V12H0Z" fill="#3b82f0" /><path d="M14 0H26V12H14Z" fill="#fdbf12" /><path d="M0 15H12V23L0 32Z" fill="#ea4b35" /><path d="M14 15H26V32L14 23Z" fill="#6fae35" /></Svg>,
  idea: (
    <Svg w={34} h={34}>
      <path d="M3 2L14 0L18 8L8 16L0 20Z" fill="#f0416c" /><path d="M0 16L8 14L6 28L1 22Z" fill="#f58a3c" /><path d="M20 3L26 0L33 8L32 27L24 33L14 28Z" fill="#1f6df0" /><path d="M4 24H22L18 31L3 33Z" fill="#b0418f" />
      <rect x="6" y="7" width="21" height="21" fill="#0b0b0b" /><text x="9" y="19" fontSize="12" fontWeight="700" fill="#fff" fontFamily="'Liberation Mono', monospace">IJ</text><path d="M9 24.500H17" stroke="#fff" strokeWidth="2" />
    </Svg>
  ),
  firefox: (
    <Svg w={32} h={32}>
      <path d="M1 18C1 12 3 8 5 5L8 9L12 3L14 8L20 9L19 3L23 0C23 5 30 9 31 18C31 26 24 31.500 16 31.500S1 26 1 18Z" fill="#ff7a1f" />
      <path d="M23 0C22 6 31 9 31 18C31 25 26 29 22 30C27 24 25 16 21 12L19 6Z" fill="#ffd43b" /><path d="M2 21C4 28 10 31.500 16 31.500C22 31.500 27 28 29 24C20 29 8 28 2 21Z" fill="#ff3d63" /><circle cx="16" cy="17" r="6.500" fill="#7a3fe4" /><path d="M5 13C9 9 14 11 17 13L12 16Z" fill="#ff9a2b" />
    </Svg>
  ),
  chrome: (
    <Svg w={32} h={32}>
      <circle cx="16" cy="16" r="15" fill="#f9c938" /><path d="M16 16L3 8.500A15 15 0 0 1 29 8.500H16Z" fill="#e2463a" /><path d="M3 8.500A15 15 0 0 0 15 31L21 21L16 16L9.500 18Z" fill="#2e9b52" /><circle cx="16" cy="16" r="7.300" fill="#fff" /><circle cx="16" cy="16" r="5.800" fill="#3b7fe8" />
    </Svg>
  ),
  smile: (
    <Svg w={30} h={32}><ellipse cx="15" cy="16" rx="13" ry="14.500" fill="#f6f6f6" stroke="#555" strokeWidth="1.500" /><circle cx="10" cy="11.500" r="2" fill="#222" /><circle cx="20" cy="11.500" r="2" fill="#222" /><path d="M7 18Q15 27 23 18" stroke="#222" strokeWidth="1.800" /></Svg>
  ),
  folder: (
    <Svg w={32} h={28}><path d="M1 1H13L15 4H31V26H1Z" fill="#f4c84f" /><path d="M1 7H31V26H1Z" fill="#fbe08d" /><path d="M7 15H26V28H21V20H12V28H7Z" fill="#2aa3dc" /><rect x="3" y="2" width="8" height="2" fill="#fff" /></Svg>
  ),
  sublime: (
    <Svg w={32} h={30}><path d="M4 0H28L30 22H2Z" fill="#4a4a4a" /><path d="M2 22H30L31 28H1Z" fill="#9d9d9d" /><path d="M1 22H31V24H1Z" fill="#333" /><Sans x={16} y={18} s={18} c="#f28c28" b>S</Sans></Svg>
  ),
  word: (
    <Svg w={32} h={31}>
      <path d="M6 .5H30.500V30.500H.5V5Z" fill="#bdd7f5" stroke="#eaf3fc" /><path d="M16 20H31V31H1V26Z" fill="#f4f8fd" />
      <path d="M3 4H9L11.500 15L14 4H18L20.500 15L22.500 4H27L23 22H18.500L16 12L13 22H8Z" fill="#1b55b0" /><path d="M18 21L31 17L32 27L22 30Z" fill="#fff" stroke="#b9cde5" strokeWidth=".6" />
    </Svg>
  ),
};
const apps = [
  ["youdao"], ["wechat"], ["pan"], ["man"], ["finder"], ["cam", "green"], ["navi"], ["vmware", "run"], ["putty", "run"], ["ribbon"], ["idea"],
  ["firefox", "run"], ["chrome"], ["smile"], ["folder", "run"], ["sublime", "run"],
];
const TaskBar = () => (
  <div className="flex h-[57px] shrink-0 items-stretch bg-[#03201d]">
    <div className="flex w-[66px] items-center justify-center">
      <Svg w={24} h={24}><path d="M0 3.500L10.500 2V11.300H0ZM12 1.800L24 0V11.300H12ZM0 12.700H10.500V22L0 20.500ZM12 12.700H24V24L12 22.200Z" fill="#fff" /></Svg>
    </div>
    <div className="ml-[13px] flex gap-[12.6px]">
      {apps.map(([k, st]) => (
        <div key={k} className={`flex w-[53px] flex-col items-center ${st === "green" ? "bg-[#26693b]" : ""} ${k === "chrome" || k === "folder" || k === "sublime" ? "-ml-px" : ""}`}>
          <div className="flex h-[53px] items-center justify-center pt-[2px]">{I[k]}</div>
          {st && <div className={`h-[3px] w-full ${st === "green" ? "bg-[#3fd52c]" : "bg-[#76b9ed]"}`} />}
        </div>
      ))}
    </div>
    <div className="ml-[5px] flex w-[62px] flex-col items-center bg-[#334f4c]">
      <div className="flex h-[53px] items-center">{I.word}</div>
      <div className="h-[3px] w-full bg-[#76b9ed]" />
    </div>
    <div className="mb-[3px] flex flex-1 items-center">
      <div className="ml-[16px] flex h-[21px] w-[20px] items-center justify-center bg-white text-[17px] leading-none text-black">拼</div>
      <Svg w={19} h={10} className="ml-[33px]"><path d="M1 9L9.500 1L18 9" stroke="#fff" strokeWidth="1.400" /></Svg>
      <Svg w={22} h={22} className="ml-[12px]"><path d="M7 1H15L21 7V15L15 21H7L1 15V7Z" fill="#d11507" stroke="#e9d9d6" /></Svg>
      <Svg w={23} h={16} className="ml-[12px]"><rect x="6.500" y="2.500" width="14" height="11" stroke="#fff" strokeWidth="1.400" /><rect x="9" y="5" width="6" height="6" fill="#fff" /><path d="M22 5.500V10.500M3 0V4M1 4H6V8H3V14H6" stroke="#fff" strokeWidth="1.400" /></Svg>
      <Svg w={23} h={19} className="ml-[11px]"><path d="M6 2H22V14H5V6M14 14V18M8 18H18" stroke="#fff" strokeWidth="1.400" /><rect x="1" y="1" width="4" height="6" stroke="#fff" strokeWidth="1.200" /><path d="M3 7V18" stroke="#fff" strokeWidth="1.200" /></Svg>
      <Svg w={23} h={18} className="ml-[10px]"><path d="M1 6H4L9 2V16L4 12H1Z" stroke="#fff" strokeWidth="1.300" /><path d="M12 6.500Q13.500 9 12 11.500M15.500 4Q18.500 9 15.500 14" stroke="#fff" strokeWidth="1.300" /><path d="M19 1.500Q23.500 9 19 16.500" stroke="#667" strokeWidth="1.300" /></Svg>
      <div className="ml-[8px] flex w-[96px] flex-col items-center whitespace-nowrap text-[16.7px] leading-[25px] tracking-[0.35px] text-white"><span>9:38</span><span>2020/10/21</span></div>
      <div className="ml-[5px] h-[54px] w-px bg-[#5c6f6d]" />
    </div>
  </div>
);

/* ---------- floating recorder toolbar ---------- */
const Grip = ({ className }) => (
  <Svg w={6} h={32} className={className}><path d="M1 0V32M3 1V32M5 0V32" stroke="#3c5f9f" strokeDasharray="1 1" strokeWidth="1.500" /></Svg>
);
const Chip = ({ a, b, off, className = "" }) => (
  <div className={`flex h-[34px] w-[34px] shrink-0 flex-col items-center justify-center border text-[14px] leading-[15px] ${off ? "border-white bg-[#9a9ff0] text-white" : "border-[#d8503f] bg-[#fcf58c] text-[#d62310]"} ${className}`}>
    <span className="whitespace-nowrap">{a}</span><span className="whitespace-nowrap">{b}</span>
  </div>
);
const Recorder = () => (
  <div className="absolute left-[850px] top-px flex h-[49px] w-[581px] flex-col border-l border-[#222] bg-white">
    <div className="mt-[3px] flex h-[46px] items-center border-t border-black bg-linear-to-b from-[#bccdf5] via-[#a8bdf0] to-[#7c9bdb]">
      <Grip className="ml-[5px]" />
      <Chip a="完美" b="画质" className="ml-[9px]" />
      <Chip a="很好" b="画质" className="ml-[11px]" />
      <Chip a="较好" b="画质" off className="ml-[10px]" />
      <Chip a="一般" b="画质" className="ml-[11px]" />
      <Grip className="ml-[10px]" />
      <Svg w={40} h={40} className="ml-[7px]">
        <circle cx="20" cy="20" r="18.500" fill="#4d86bd" stroke="#1d2f45" strokeWidth="2" /><circle cx="20" cy="20" r="16" fill="#6ea5d6" stroke="#dce9f5" strokeWidth="2" />
        <path d="M12 11L20 8L21 12L20 14L25 20L28 22L27 25L15 27L14 24L17 21L15 15L13 14Z" fill="#f3f6f9" stroke="#31506f" /><path d="M22 26L27 33" stroke="#223" strokeWidth="2" />
      </Svg>
      <Chip a="窗口" b="模式" off className="ml-[7px]" />
      <Chip a="快速" b="高效" className="ml-[10px]" />
      <Chip a="层叠" b="窗口" className="ml-[11px]" />
      <Chip a="语音" b="广播" className="ml-[10px]" />
      <Svg w={32} h={36} className="ml-[12px]">
        <path d="M12 2L26 6L20 23L6 17Z" fill="#cfd6fa" stroke="#111" strokeWidth="1.600" /><path d="M17 22V32M13 25H21M14 29H20" stroke="#111" strokeWidth="1.800" /><path d="M2 34H31" stroke="#0d4a1a" strokeWidth="2.600" /><Sans x={4.500} y={30} s={12} c="#0d7a1a" b>t</Sans>
      </Svg>
      <Svg w={36} h={34} className="ml-[12px]">
        <rect x=".5" y="1.500" width="19" height="18" fill="#43a5e8" stroke="#3770b8" /><rect x="22" y="6" width="13.500" height="16" fill="#4c9be0" stroke="#3770b8" /><path d="M4 26H18V32H2ZM24 26H34V32H22Z" fill="#6a77c0" /><path d="M5 19L11 13V17H24V13L30 19L24 25V21H11V25Z" fill="#fcd116" stroke="#c79408" strokeWidth=".6" />
      </Svg>
      <Svg w={31} h={36} className="ml-[10px]">
        <path d="M6 10L29 1V25L24 27L22 25L11 30L8 34L5 32Z" fill="#e9edf2" stroke="#111" strokeWidth="1.800" /><path d="M11 12L26 6V20L11 25Z" fill="#111" /><Sans x={18.500} y={20.500} s={13} c="#f5c61a" b>C</Sans><path d="M0 30L7 27V35Z" fill="#111" />
      </Svg>
      <Grip className="ml-[11px]" />
    </div>
  </div>
);

/* ---------- pen annotations ---------- */
const Ink = () => (
  <svg className="pointer-events-none absolute inset-0" width="1521" height="856" viewBox="0 0 1521 856" fill="none" stroke="#fb1600" strokeLinecap="round" strokeLinejoin="round" strokeWidth="17.500">
    <g transform="translate(375 205) scale(.33333)">
      <path d="M312 320L290 320L270 345L262 378L290 410L345 438L405 443L490 432L560 415L630 390L653 365L655 335L640 310L620 298L515 297L490 303L440 320" />
    </g>
    <g transform="translate(780 160) scale(.33333)">
      <path d="M114 300L78 340L80 355L98 385L97 410L70 435L37 462L60 495L82 560L105 650L110 700L104 790L88 845L86 910" />
      <path d="M245 290L262 380L262 420L245 460L230 460L196 415L196 375L215 325L245 283L300 283Q335 295 343 330L348 410L330 455L318 460L300 415L300 385L315 350L352 325L400 290L430 262L490 228L515 258L555 258L578 248" />
      <path d="M667 24L655 70L640 150L636 230L630 355L600 335L555 325L540 335L525 375L514 430L510 490L522 508L535 490L555 440L570 385L610 410L675 410L708 440L770 440L830 405L860 350M675 410L720 370L780 340L835 318L842 300L835 278L800 278L750 300L690 345L678 380Z" />
      <path d="M860 338L835 475L838 425L862 350L915 308L935 308L980 345L1010 325L1030 325L1042 332" />
      <path d="M860 338L852 415L835 470L836 410Z" fill="#fb1600" />
      <path d="M1008 459L1045 459L1090 445L1190 427L1265 423L1282 405L1278 383" />
      <path d="M345 485L310 525L290 570L283 620L283 740L322 785L320 825M260 795L285 825L310 837L330 815L345 785L362 765" />
      <path d="M290 825L325 800L335 795L325 830L310 837Z" fill="#fb1600" />
      <path d="M138 538L160 529L210 529L330 542L480 568L720 597L900 628L1000 645L1110 657L1245 658L1280 662L1417 662L1435 650L1490 635L1575 605L1845 602L1860 608L1930 608L1945 600L2033 588L2010 580" />
    </g>
    <g transform="translate(1120 160) scale(.33333)">
      <path d="M265 334L325 335L415 347L375 405L372 437L395 425L435 385L452 340L457 290L440 235L415 198L455 230L487 265L488 310L470 350L453 415L530 348L532 395L580 392L690 310" />
      <path d="M778 100L760 145L720 215L700 285L665 325L692 328L712 285L745 215L768 165Z" fill="#fb1600" />
      <path d="M690 335L655 400L615 430L598 425L600 390L640 350L690 300M690 335L705 342L755 342L790 322L820 322L865 358L890 358L922 295" />
      <path d="M922 295L898 340L884 370L882 415M922 295L918 325L890 358Z" fill="#fb1600" />
      <path d="M865 435L920 422L955 385L1000 335L1060 280L1112 238L1105 300L1075 368L1055 368L1055 255L1035 245L1015 265L1000 310L990 350" />
      <path d="M870 435L920 405L975 350L1000 330L960 390L925 422Z" fill="#fb1600" />
    </g>
    <g transform="translate(780 400) scale(.33333)">
      <path d="M485 86L545 93L650 104L680 125L712 160L735 230L765 300L785 365L792 430L785 520L765 600L730 720L700 785L645 850L580 890L540 905L470 935L370 964L310 964L235 948L180 910L125 840L95 750L80 690L80 620L90 540L92 480L120 370L150 315L225 250L270 215L400 125L435 110Z" />
      <path d="M362 248L462 248M298 284L315 276L360 278L430 283L430 290M405 240L428 180L460 122" />
      <path d="M435 118L432 180L418 210L445 160L440 120Z" fill="#fb1600" />
      <path d="M370 360L415 360L422 430L350 487L365 492L468 505L470 480M305 530L395 530L420 537L487 573M290 550L378 550" />
      <path d="M348 640L365 632L405 634L430 655L375 655" />
      <path d="M415 645L430 660L445 680L415 705L462 745L448 760L440 735L395 712L350 714L390 705L420 675Z" fill="#fb1600" />
      <path d="M448 755L447 790L415 820L390 820L365 805L325 785L350 797L390 790L435 765M360 800L435 796" />
      <path d="M325 785L365 802L395 785L430 768L425 795L370 805Z" fill="#fb1600" strokeWidth="8" />
      <path d="M268 886L285 880L325 864L400 864L430 872L512 873" />
    </g>
  </svg>
);

export default function App() {
  return (
    <div className="relative flex h-[856px] w-[1521px] flex-col overflow-hidden border-x border-t border-black bg-white font-['Noto_Sans','Noto_Sans_CJK_SC',sans-serif]">
      <TitleBar />
      <TabRow />
      <Ribbon />
      <div className="flex h-[571px] shrink-0 border-b-2 border-[#868e98] bg-linear-to-b from-[#cbd2d6] to-[#b4babf]">
        <NavPane />
        <div className="flex min-w-0 flex-1 flex-col overflow-hidden">
          <div className="flex min-h-0 flex-1 overflow-hidden pl-[5px] pt-[8px]"><Page /></div>
          <HScroll />
        </div>
        <VScroll />
      </div>
      <StatusBar />
      <TaskBar />
      <div className="absolute -left-px -top-px"><Recorder /><Ink /></div>
    </div>
  );
}
